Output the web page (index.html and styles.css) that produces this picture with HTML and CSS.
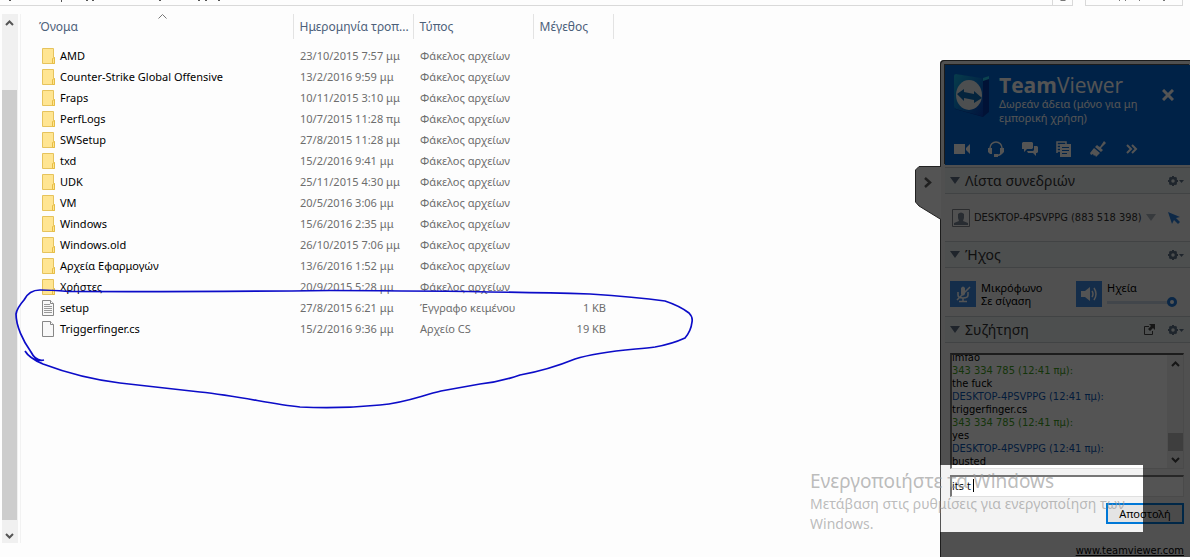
FILE: index.html
```
<!DOCTYPE html>
<html lang="el">
<head>
<meta charset="utf-8">
<title>Εξερεύνηση αρχείων</title>
<link rel="stylesheet" href="styles.css">
</head>
<body>
<svg class="defs" aria-hidden="true">
  <symbol id="folder" viewBox="0 0 13 16"><path d="M.5.5h11v8.500l1 1v5.500H.5z" fill="#ffe592" stroke="#e6c35c"/><path d="M10.500 15.500v-5l2-1v6z" fill="#ffe592" stroke="#e6bd45"/></symbol>
  <symbol id="page" viewBox="0 0 13 16"><path d="M.5.5h8l3 3v12H.5z" fill="#f8f8f8" stroke="#878787"/><path d="M8.500.5v3h3" fill="#fff" stroke="#878787"/></symbol>
  <symbol id="textpage" viewBox="0 0 13 16"><use href="#page"/><path d="M2 4.500h6M2 6.500h8M2 8.500h8M2 10.500h8M2 12.500h8" stroke="#999"/></symbol>
  <symbol id="gear" viewBox="0 0 16 12"><circle cx="5" cy="6" r="3" fill="none" stroke="#5e7287" stroke-width="2.500"/><path d="M5 1v2M5 9v2M0 6h2M8 6h2M1.500 2.500l1.400 1.400M7.100 8.100l1.400 1.400M1.500 9.500l1.400-1.400M7.100 3.900l1.400-1.400" stroke="#5e7287" stroke-width="2"/><path d="M11 5h5l-2.500 3z" fill="#5e7287"/></symbol>
  <symbol id="down" viewBox="0 0 10 7"><path d="M0 0h10L5 7z" fill="currentColor"/></symbol>
  <symbol id="chev" viewBox="0 0 9 6"><path d="M1 5l3.500-3.500L8 5" fill="none" stroke="currentColor" stroke-width="2"/></symbol>
</svg>

<main class="explorer">
  <div class="topbar">
    <div class="address">
      <svg class="marks" width="240" height="2" aria-hidden="true"><path d="M9 0h2v1H9zM61 0h1v2h-1zM86 0h2v1h-2zM92 0h2v1h-2zM159 0h2v1h-2zM198 0h2v1h-2zM205 0h2v1h-2zM218 0h2v1h-2z" fill="#555"/></svg>
      <span class="refresh"><svg width="8" height="2" aria-hidden="true"><path d="M1 0h6L6 1H2z" fill="#777"/></svg></span>
    </div>
    <div class="search"><svg class="marks" width="90" height="2" aria-hidden="true"><path d="M33 0h1v1h-1zM39 0h1v1h-1zM53 0h1v1h-1zM77 0h2v1h-2z" fill="#777"/></svg></div>
  </div>
  <div class="view">
    <div class="scrollbar">
      <svg width="9" height="6"><use href="#chev"/></svg>
      <div class="thumb"></div>
      <svg class="flip" width="9" height="6"><use href="#chev"/></svg>
    </div>
    <div class="list">
      <table class="files">
        <thead><tr>
          <th class="name"><svg class="sort" width="9" height="5" viewBox="0 0 9 5"><path d="M.5 4.500l4-4 4 4" fill="none" stroke="#777"/></svg>Όνομα</th>
          <th class="date">Ημερομηνία τροπ...</th><th class="type">Τύπος</th><th class="size">Μέγεθος</th>
        </tr></thead>
        <tbody>
          <tr><td><span class="file"><svg><use href="#folder"/></svg>AMD</span></td><td>23/10/2015 7:57 μμ</td><td>Φάκελος αρχείων</td><td></td></tr>
          <tr><td><span class="file"><svg><use href="#folder"/></svg>Counter-Strike Global Offensive</span></td><td>13/2/2016 9:59 μμ</td><td>Φάκελος αρχείων</td><td></td></tr>
          <tr><td><span class="file"><svg><use href="#folder"/></svg>Fraps</span></td><td>10/11/2015 3:10 μμ</td><td>Φάκελος αρχείων</td><td></td></tr>
          <tr><td><span class="file"><svg><use href="#folder"/></svg>PerfLogs</span></td><td>10/7/2015 11:28 πμ</td><td>Φάκελος αρχείων</td><td></td></tr>
          <tr><td><span class="file"><svg><use href="#folder"/></svg>SWSetup</span></td><td>27/8/2015 11:28 μμ</td><td>Φάκελος αρχείων</td><td></td></tr>
          <tr><td><span class="file"><svg><use href="#folder"/></svg>txd</span></td><td>15/2/2016 9:41 μμ</td><td>Φάκελος αρχείων</td><td></td></tr>
          <tr><td><span class="file"><svg><use href="#folder"/></svg>UDK</span></td><td>25/11/2015 4:30 μμ</td><td>Φάκελος αρχείων</td><td></td></tr>
          <tr><td><span class="file"><svg><use href="#folder"/></svg>VM</span></td><td>20/5/2016 3:06 μμ</td><td>Φάκελος αρχείων</td><td></td></tr>
          <tr><td><span class="file"><svg><use href="#folder"/></svg>Windows</span></td><td>15/6/2016 2:35 μμ</td><td>Φάκελος αρχείων</td><td></td></tr>
          <tr><td><span class="file"><svg><use href="#folder"/></svg>Windows.old</span></td><td>26/10/2015 7:06 μμ</td><td>Φάκελος αρχείων</td><td></td></tr>
          <tr><td><span class="file"><svg><use href="#folder"/></svg>Αρχεία Εφαρμογών</span></td><td>13/6/2016 1:52 μμ</td><td>Φάκελος αρχείων</td><td></td></tr>
          <tr><td><span class="file"><svg><use href="#folder"/></svg>Χρήστες</span></td><td>20/9/2015 5:28 μμ</td><td>Φάκελος αρχείων</td><td></td></tr>
          <tr><td><span class="file"><svg><use href="#textpage"/></svg>setup</span></td><td>27/8/2015 6:21 μμ</td><td>Έγγραφο κειμένου</td><td>1 KB</td></tr>
          <tr><td><span class="file"><svg><use href="#page"/></svg>Triggerfinger.cs</span></td><td>15/2/2016 9:36 μμ</td><td>Αρχείο CS</td><td>19 KB</td></tr>
        </tbody>
      </table>
    </div>
  </div>
</main>

<aside class="teamviewer">
  <button class="tab" aria-label="Απόκρυψη">
    <svg width="26" height="54" viewBox="0 0 26 54"><path d="M26 .5H4L.5 4v32L4 40l22 13.500" fill="#545454" stroke="#222"/><path d="M10 12l5 4.500-5 4.500" fill="none" stroke="#202020" stroke-width="2.500"/></svg>
  </button>
  <div class="panel">
    <header class="brand">
      <div class="title-row">
        <svg class="logo" width="38" height="46" viewBox="0 0 38 46">
          <defs><linearGradient id="lg" x1="0" y1="0" x2="1" y2="1"><stop offset="0" stop-color="#17b7e4"/><stop offset=".55" stop-color="#0877d6"/><stop offset="1" stop-color="#0a3fb8"/></linearGradient></defs>
          <path d="M2 1l28 5 6-3v36l-6 5L2 36z" fill="#0638a5"/><path d="M1 3q0-2 2-2l25 4q2 0 2 2v35q0 2-2 1L3 36q-2-1-2-3z" fill="url(#lg)"/><path d="M30 5l6-2v3l-6 2z" fill="#25c8ee"/>
          <ellipse cx="16" cy="22" rx="13" ry="15" fill="#e8eef2"/><path d="M4 21l7-5v3l10 2v-3l8 7-8 5v-3l-10-2v3z" fill="#0d6fb8"/>
        </svg>
        <div class="words"><h1><b>Team</b>Viewer</h1><p>Δωρεάν άδεια (μόνο για μη<br>εμπορική χρήση)</p></div>
        <button class="close" aria-label="Κλείσιμο"><svg width="12" height="12"><path d="M1 1l10 10M11 1L1 11" stroke="#fff" stroke-width="3"/></svg></button>
      </div>
      <nav class="tools">
        <button aria-label="Βίντεο"><svg viewBox="0 0 16 16"><path d="M0 3h11v10H0zM12 7l4-4v10l-4-4z"/></svg></button>
        <button aria-label="Ήχος"><svg viewBox="0 0 16 16"><path d="M2 9V7a6 6 0 0 1 12 0v3q0 4-5 4.500" fill="none" stroke="#fff" stroke-width="1.500"/><path d="M0 7h4v6H2L0 11zM12 7h4v4l-2 2h-2zM6 13h4v3H6z"/></svg></button>
        <button aria-label="Συζήτηση"><svg viewBox="0 0 16 16"><path d="M1 1h9l1 1v5l-1 1H5l-3 3V8H0V2z"/><path d="M12 5h3l1 1v5l-1 1h-1v3l-3-3H6l-1-2h6l1-1z"/></svg></button>
        <button aria-label="Αρχεία"><svg viewBox="0 0 16 16"><path d="M1 12V1h9v2M1 4h3M1 7h3M1 10h3" fill="none" stroke="#fff" stroke-width="1.500"/><path fill-rule="evenodd" d="M4 3h11v13H4zM6 6v1h7V6zM6 9v1h7V9zM6 12v1h5v-1z"/></svg></button>
        <button aria-label="Πίνακας"><svg viewBox="0 0 16 16"><path d="M14 0l2 2-5 5 1 2-4-4 2 1zM7 4l6 5-2 2-6-5zM4 7l6 5-4 4-1-2-1 1-1-2-2 1-1-2z"/></svg></button>
        <button aria-label="Περισσότερα"><svg viewBox="0 0 16 16"><path d="M3 4l4 4-4 4M8 4l4 4-4 4" fill="none" stroke="#fff" stroke-width="2"/></svg></button>
      </nav>
    </header>

    <section>
      <h2 class="bar"><svg class="tri"><use href="#down"/></svg><span>Λίστα συνεδριών</span><button aria-label="Ρυθμίσεις"><svg width="16" height="12"><use href="#gear"/></svg></button></h2>
      <div class="session">
        <svg width="18" height="18" viewBox="0 0 18 18"><path d="M.5.5h17v17H.5z" fill="#f4f4f4" stroke="#82868c"/><path d="M2 16v-2l5-2-1-3V5q3-3 6 0v4l-1 3 5 2v2z" fill="#7b8595"/></svg>
        <button class="who">DESKTOP-4PSVPPG (883 518 398)<svg><use href="#down"/></svg></button>
        <svg width="13" height="14" viewBox="0 0 13 14"><path d="M0 1l12 5-4 1 4 4-2 2-4-4-2 4z" fill="#2b7cd8"/></svg>
      </div>
    </section>

    <section>
      <h2 class="bar"><svg class="tri"><use href="#down"/></svg><span>Ήχος</span><button aria-label="Ρυθμίσεις"><svg width="16" height="12"><use href="#gear"/></svg></button></h2>
      <div class="audio">
        <button class="square" aria-label="Μικρόφωνο"><svg width="16" height="18" viewBox="0 0 16 18"><path d="M6 3q2-3 4 0v6q-2 3-4 0z" fill="#fff"/><path d="M3 7v3q0 3 5 3t5-3V7M8 13v3M4 16.500h8M2 15L15 2" fill="none" stroke="#fff" stroke-width="1.500"/></svg></button>
        <div class="mic">Μικρόφωνο<br>Σε σίγαση</div>
        <button class="square" aria-label="Ηχεία"><svg width="17" height="14" viewBox="0 0 17 14"><path d="M0 4h4l5-4v14l-5-4H0z" fill="#fff"/><path d="M11 4q2 3 0 6M13 1q4 6 0 12" fill="none" stroke="#fff" stroke-width="1.500"/></svg></button>
        <div class="speaker"><label for="vol">Ηχεία</label><input id="vol" type="range" value="100"></div>
      </div>
    </section>

    <section class="chat">
      <h2 class="bar"><svg class="tri"><use href="#down"/></svg><span>Συζήτηση</span>
        <button aria-label="Αποσύνδεση"><svg width="11" height="11" viewBox="0 0 11 11"><path d="M5 2.500H.5v8h8V7" fill="none" stroke="#444"/><path d="M5 0h6v6L9 4 6 7 4 5l3-3z" fill="#444"/></svg></button>
        <button aria-label="Ρυθμίσεις"><svg width="16" height="12"><use href="#gear"/></svg></button></h2>
      <form class="chat-body">
        <div class="log">
          <div class="lines">
            <p>lmfao</p><p class="green">343 334 785 (12:41 πμ):</p><p>the fuck</p><p class="blue">DESKTOP-4PSVPPG (12:41 πμ):</p><p>triggerfinger.cs</p><p class="green">343 334 785 (12:41 πμ):</p><p>yes</p><p class="blue">DESKTOP-4PSVPPG (12:41 πμ):</p><p>busted</p>
          </div>
          <div class="log-scroll"><svg width="9" height="6"><use href="#chev"/></svg><div class="log-thumb"></div><svg class="flip" width="9" height="6"><use href="#chev"/></svg></div>
        </div>
        <div class="entry"><input type="text" value="its t" aria-label="Μήνυμα"><i class="caret"></i></div>
        <button class="send" type="button">Αποστολή</button>
        <a class="site" href="#">www.teamviewer.com</a>
      </form>
    </section>
    <div class="spotlight"></div>
  </div>
</aside>

<svg class="ink" width="700" height="420" aria-hidden="true"><path d="M44 360Q36 362 31 352C23 341 16 326 16 314Q17 308 24 300Q29 290 40 290Q50 290 68 291.500Q190 292 330 290.500Q480 291 590 294Q635 297 665 301Q680 306 689 313Q693 317 692 322Q691 331 685 338Q672 344 655 347C630 350 600 351 575 359Q548 370 520 375Q500 382 480 384L441 391C420 396 405 403 380 405Q340 409 300 407C270 404 240 396 200 392L120 383Q80 378 43 364Q29 358 25 351"/></svg>
<div class="watermark"><strong>Ενεργοποιήστε τα Windows</strong><p>Μετάβαση στις ρυθμίσεις για ενεργοποίηση των Windows.</p></div>
</body>
</html>
```
FILE: styles.css
```
* { box-sizing: border-box; }
body { margin: 0; min-height: 100vh; display: flex; position: relative; background: #fdfdfd; color: #000; font: 12px/16px "Noto Sans", sans-serif; overflow: hidden; }
h1, h2, p { margin: 0; font-weight: normal; }
button { padding: 0; border: 0; background: none; font: inherit; color: inherit; display: flex; align-items: center; justify-content: center; }
svg { display: block; flex: none; }
.defs { position: absolute; width: 0; height: 0; }

.explorer { flex: 1; min-width: 0; display: flex; flex-direction: column; }
.topbar { display: flex; gap: 12px; height: 6px; width: 100vw; padding-right: 7px; }
.address { flex: 1; display: flex; justify-content: space-between; border: solid #d9d9d9; border-width: 0 1px 1px 0; }
.refresh { width: 20px; border-left: 1px solid #d9d9d9; padding-left: 6px; }
.search { width: 98px; border: 1px solid #d9d9d9; border-top: 0; }
.view { flex: 1; display: flex; padding: 8px 0 14px 2px; }
.scrollbar { width: 16px; display: flex; flex-direction: column; align-items: center; background: #f0f0f0; color: #555; padding: 6px 1px 4px 0; }
.thumb { flex: 1; width: 100%; margin: 64px 0 13px; background: #cdcdcd; }
.flip { transform: scaleY(-1); }
.list { flex: 1; margin-left: 2px; border-left: 1px solid #f2f2f2; padding-left: 8px; }

.files { border-collapse: collapse; table-layout: fixed; width: 584px; color: #6d6d6d; font: 11px/16px "Noto Sans", sans-serif; }
.files th { height: 25px; padding: 0 0 0 6px; text-align: left; font-weight: normal; color: #4c607a; border-right: 1px solid #e3e3e3; font-size: 12px; white-space: nowrap; position: relative; }
.files .name { width: 264px; padding-left: 10px; }
.date, .type { width: 120px; }
.size { width: 80px; }
.sort { position: absolute; left: 129px; top: 0; }
.files td { height: 21px; padding: 0 7px; white-space: nowrap; }
.files td:first-child { padding-left: 13px; }
.files td:last-child { text-align: right; }
.files tbody::before { content: ""; display: block; height: 6px; }
.file { display: flex; align-items: center; gap: 5px; color: #000; }
.file svg { width: 13px; height: 16px; }

.teamviewer { display: flex; align-items: flex-start; margin-top: 60px; height: calc(100vh - 60px); min-height: 497px; }
.tab { margin: 106px -1px 0 0; position: relative; z-index: 2; }
.panel { width: 250px; align-self: stretch; position: relative; overflow: hidden; padding: 5px 0 0 5px; border-radius: 4px 0 0 0; background: #f3f3f3; box-shadow: inset 1px 1px #555; }
.brand { height: 100px; background: #0068d8; color: #fff; padding: 8px 16px 0 8px; box-shadow: -1px -1px #555; }
.title-row { display: flex; align-items: flex-start; height: 62px; }
.words { flex: 1; padding-left: 8px; white-space: nowrap; }
.words p { font-size: 11px; line-height: 14px; }
.words h1 { font: 21px/24px "Open Sans", sans-serif; }
.close { margin-top: 16px; }
.tools { display: flex; gap: 18px; margin: 6px 0 0 1px; }
.tools svg { width: 16px; height: 16px; fill: #fff; }
.bar { display: flex; align-items: center; gap: 5px; height: 27px; padding: 0 6px 0 5px; background: #e9eef0; border: solid #c4ccce; border-width: 1px 0; font: 14px/20px "Noto Sans", sans-serif; color: #333; }
.bar span { flex: 1; }
.bar button + button { margin-left: 8px; }
.tri { width: 10px; height: 7px; color: #5e6f82; }
.brand + section { margin-top: 2px; }
.session { height: 47px; display: flex; align-items: center; gap: 4px; padding: 0 9px 0 7px; color: #333; }
.who { flex: 1; justify-content: flex-start; gap: 4px; font: 11px/13px "DejaVu Sans Condensed", "DejaVu Sans", sans-serif; white-space: nowrap; }
.who svg { width: 10px; height: 7px; color: #a7b0ba; }
.audio { height: 48px; display: flex; align-items: center; gap: 5px; padding: 4px 13px 0 5px; }
.square { width: 26px; height: 26px; background: #3f8ae0; flex: none; }
.mic { width: 90px; font: 11px/13px "Noto Sans", sans-serif; }
.speaker { flex: 1; min-width: 0; font: 11px/13px "Noto Sans", sans-serif; }
.speaker label, .speaker input { display: block; }
.speaker input { appearance: none; width: 100%; height: 10px; margin: 3px 0 0; background: linear-gradient(#c8d4e4, #c8d4e4) center/100% 3px no-repeat; }
.speaker input::-webkit-slider-thumb { appearance: none; width: 10px; height: 10px; border: 3px solid #2277d4; border-radius: 50%; background: #fff; }
.chat-body { display: flex; flex-direction: column; padding: 10px 6px 0 5px; font: 11px/13px "DejaVu Sans Condensed", "DejaVu Sans", sans-serif; }
.log { display: flex; height: 116px; border: 1px solid #e0e0e0; border-top: 2px solid #555; border-left: 2px solid #777; background: #fff; }
.lines { flex: 1; display: flex; flex-direction: column; justify-content: flex-end; overflow: hidden; white-space: nowrap; }
.green { color: #3fa020; }
.blue { color: #0b57b4; }
.log-scroll { width: 16px; display: flex; flex-direction: column; align-items: center; padding: 6px 0 5px; background: #eee; color: #444; }
.log-thumb { width: 15px; height: 18px; margin: auto 0 6px; background: #bbb; }
.entry { display: flex; position: relative; margin-top: 6px; }
.entry input { width: 100%; height: 22px; padding: 0; border: 1px solid #e0e0e0; border-top: 2px solid #777; border-left: 2px solid #777; border-radius: 0; font: inherit; }
.caret { position: absolute; left: 23px; top: 4px; width: 1px; height: 13px; background: #000; }
.send { align-self: flex-end; width: 78px; height: 21px; margin-top: 6px; border: 2px solid #0078d7; background: #e4e4e4; font: 11px/13px "Noto Sans", sans-serif; }
.site { align-self: flex-end; margin-top: 20px; color: #000; }
.spotlight { position: absolute; left: 0; top: 405px; width: 203px; height: 67px; box-shadow: 0 0 0 1200px rgba(0, 0, 0, .67); }

.ink { position: absolute; left: 0; top: 0; pointer-events: none; }
.ink path { fill: none; stroke: #0c0cc8; stroke-width: 1.700; }
.watermark { position: absolute; right: 40px; bottom: 23px; width: 340px; color: rgba(150, 150, 150, .65); font: 14px/20px "Noto Sans", sans-serif; pointer-events: none; }
.watermark strong { display: block; font: 19px/25px "Noto Sans", sans-serif; }
```
